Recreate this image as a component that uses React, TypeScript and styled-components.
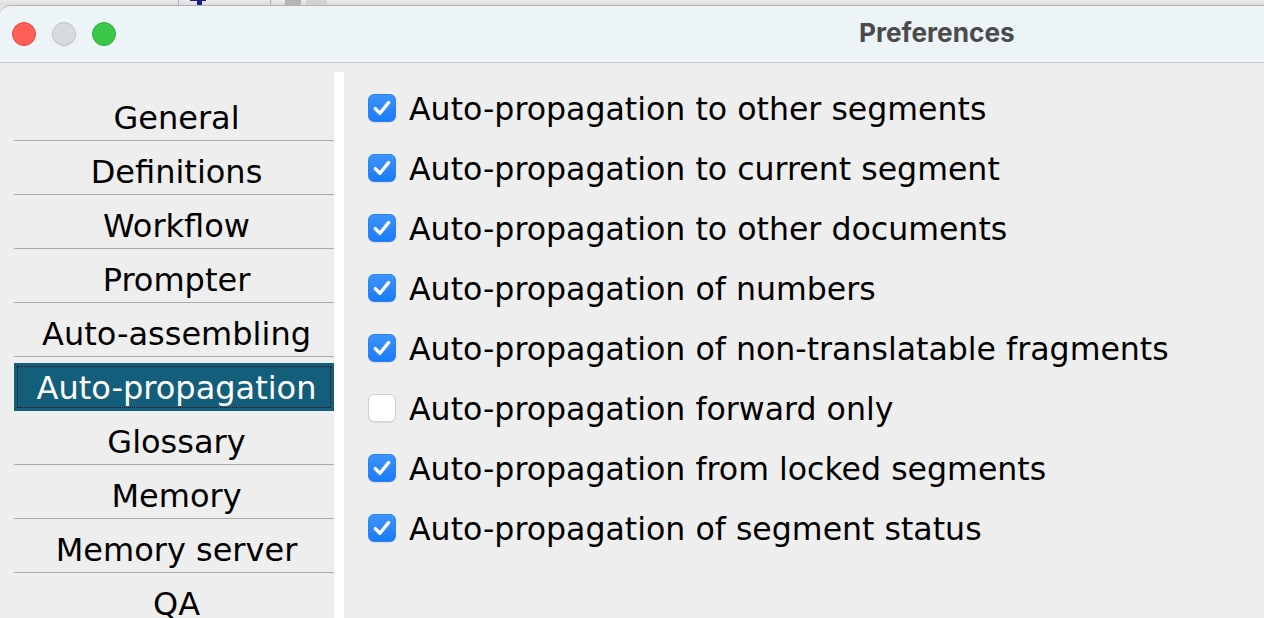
import styled, { createGlobalStyle } from 'styled-components'

const GlobalStyle = createGlobalStyle`
  html, body {
    margin: 0;
    padding: 0;
    height: 100%;
    overflow: hidden;
  }
  body {
    background: #e3e3e3;
    font-family: "DejaVu Sans", "Liberation Sans", sans-serif;
  }
  #root {
    height: 100%;
    display: flex;
    flex-direction: column;
  }
`

// strip of the app behind the window
const BackStrip = styled.div`
  height: 5px;
  display: flex;
  align-items: stretch;
  background: linear-gradient(#ececec, #dcdcdc);
  flex-shrink: 0;
`

const BackPiece = styled.span<{ $w: number; $bg?: string }>`
  width: ${(p) => p.$w}px;
  flex-shrink: 0;
  background: ${(p) => p.$bg || 'transparent'};
`

const NavyMark = styled.span`
  width: 16px;
  flex-shrink: 0;
  position: relative;
  &::after {
    content: '';
    position: absolute;
    left: 7px;
    top: 0;
    width: 5px;
    height: 5px;
    background: #1b1f8a;
  }
  &::before {
    content: '';
    position: absolute;
    left: 0;
    top: 0;
    width: 16px;
    height: 1px;
    background: #1b1f8a;
  }
`

const Window = styled.div`
  flex: 1;
  display: flex;
  flex-direction: column;
  background: #eeeeee;
  border-top: 1px solid #b4b4b4;
  border-top-left-radius: 11px;
  overflow: hidden;
`

const TitleBar = styled.div`
  height: 56px;
  flex-shrink: 0;
  display: flex;
  align-items: center;
  padding-left: 12px;
  background: #edf4f7;
  border-bottom: 1px solid #c8c8c8;
`

const Lights = styled.div`
  display: flex;
  gap: 16px;
`

const Light = styled.span<{ $fill: string; $ring: string }>`
  width: 24px;
  height: 24px;
  border-radius: 50%;
  box-sizing: border-box;
  background: ${(p) => p.$fill};
  border: 1px solid ${(p) => p.$ring};
`

const Title = styled.div`
  margin-left: 743px;
  padding-bottom: 4px;
  font-family: Inter, "Liberation Sans", sans-serif;
  font-weight: 700;
  font-size: 26.2px;
  color: #4b4b4b;
  white-space: nowrap;
`

const Body = styled.div`
  flex: 1;
  display: flex;
  min-height: 0;
`

const Sidebar = styled.div`
  width: 320px;
  padding: 24px 0 0 14px;
  display: flex;
  flex-direction: column;
`

const SideItem = styled.div<{ $active?: boolean }>`
  margin-top: 6px;
  height: 48px;
  flex-shrink: 0;
  box-sizing: border-box;
  display: flex;
  align-items: center;
  justify-content: center;
  padding: 2px 0 0 5px;
  font-size: 32px;
  white-space: nowrap;
  color: ${(p) => (p.$active ? '#ffffff' : '#000000')};
  background: ${(p) => (p.$active ? '#135e7a' : 'transparent')};
  border-bottom: 1px solid ${(p) => (p.$active ? 'transparent' : '#a9a9a9')};
  outline: ${(p) => (p.$active ? '1px dotted #111' : 'none')};
  outline-offset: -4px;
`

const Divider = styled.div`
  width: 10px;
  margin-top: 9px;
  background: #ffffff;
  flex-shrink: 0;
`

const Main = styled.div`
  flex: 1;
  padding: 15px 0 0 24px;
  display: flex;
  flex-direction: column;
`

const Row = styled.label`
  height: 60px;
  display: flex;
  align-items: center;
  gap: 13px;
  font-size: 31.6px;
  color: #000;
  white-space: nowrap;
`

const RowText = styled.span`
  padding-top: 2px;
`

const Box = styled.span<{ $on: boolean }>`
  width: 28px;
  height: 28px;
  flex-shrink: 0;
  box-sizing: border-box;
  border-radius: 6px;
  display: flex;
  align-items: center;
  justify-content: center;
  background: ${(p) => (p.$on ? 'linear-gradient(#3d93fd, #1a7bf6)' : '#ffffff')};
  border: 1px solid ${(p) => (p.$on ? '#2b82f0' : '#cfcfcf')};
  box-shadow: 0 1px 1px rgba(0, 0, 0, 0.08);
`

const sideItems = [
  'General',
  'Definitions',
  'Workflow',
  'Prompter',
  'Auto-assembling',
  'Auto-propagation',
  'Glossary',
  'Memory',
  'Memory server',
  'QA',
]

const options: [string, boolean][] = [
  ['Auto-propagation to other segments', true],
  ['Auto-propagation to current segment', true],
  ['Auto-propagation to other documents', true],
  ['Auto-propagation of numbers', true],
  ['Auto-propagation of non-translatable fragments', true],
  ['Auto-propagation forward only', false],
  ['Auto-propagation from locked segments', true],
  ['Auto-propagation of segment status', true],
]

function Check({ on }: { on: boolean }) {
  return (
    <Box $on={on}>
      {on && (
        <svg width="26" height="26" viewBox="0 0 26 26">
          <path
            d="M6.3 13.6 L10.9 18.3 L19.6 7.6"
            fill="none"
            stroke="#fff"
            strokeWidth="3.4"
            strokeLinecap="round"
            strokeLinejoin="round"
          />
        </svg>
      )}
    </Box>
  )
}

export default function App() {
  return (
    <>
      <GlobalStyle />
      <BackStrip>
        <BackPiece $w={178} />
        <BackPiece $w={1} $bg="#b0b0b0" />
        <BackPiece $w={11} />
        <NavyMark />
        <BackPiece $w={64} />
        <BackPiece $w={1} $bg="#b0b0b0" />
        <BackPiece $w={14} />
        <BackPiece $w={16} $bg="#b5b5b5" />
        <BackPiece $w={5} />
        <BackPiece $w={21} $bg="#d2d2d2" />
      </BackStrip>
      <Window>
        <TitleBar>
          <Lights>
            <Light $fill="#fe5f57" $ring="#e2483f" />
            <Light $fill="#d7dbde" $ring="#bcc1c4" />
            <Light $fill="#3dc748" $ring="#2eac37" />
          </Lights>
          <Title>Preferences</Title>
        </TitleBar>
        <Body>
          <Sidebar>
            {sideItems.map((s) => (
              <SideItem key={s} $active={s === 'Auto-propagation'}>
                {s}
              </SideItem>
            ))}
          </Sidebar>
          <Divider />
          <Main>
            {options.map(([text, on]) => (
              <Row key={text}>
                <Check on={on} />
                <RowText>{text}</RowText>
              </Row>
            ))}
          </Main>
        </Body>
      </Window>
    </>
  )
}
